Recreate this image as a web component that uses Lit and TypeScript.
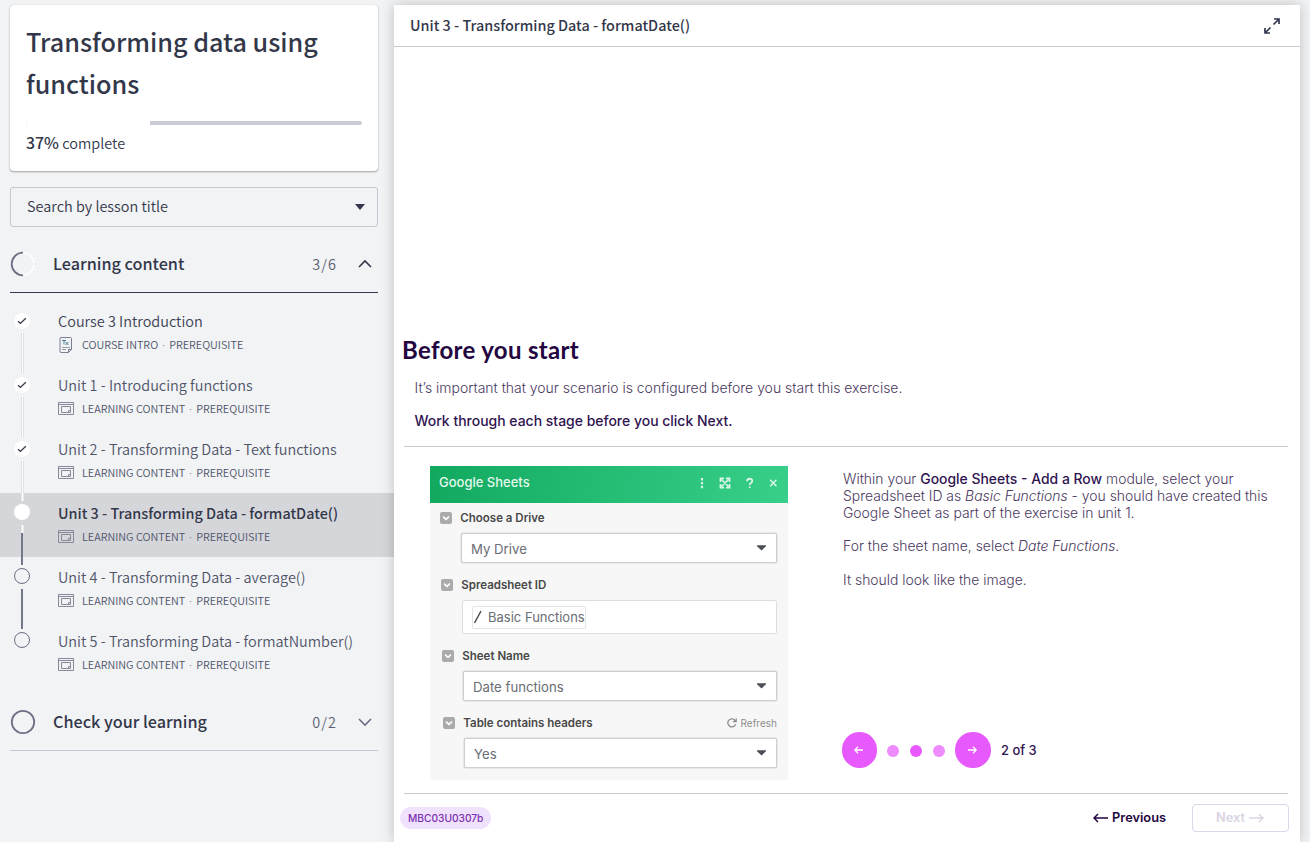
import { LitElement, html, css, svg, nothing } from "lit";
import { customElement, property } from "lit/decorators.js";
import { classMap } from "lit/directives/class-map.js";

type Status = "done" | "current" | "todo";
interface Lesson {
  title: string;
  kind: string;
  status: Status;
}

const LESSONS: Lesson[] = [
  { title: "Course 3 Introduction", kind: "COURSE INTRO", status: "done" },
  { title: "Unit 1 - Introducing functions", kind: "LEARNING CONTENT", status: "done" },
  { title: "Unit 2 - Transforming Data - Text functions", kind: "LEARNING CONTENT", status: "done" },
  { title: "Unit 3 - Transforming Data - formatDate()", kind: "LEARNING CONTENT", status: "current" },
  { title: "Unit 4 - Transforming Data - average()", kind: "LEARNING CONTENT", status: "todo" },
  { title: "Unit 5 - Transforming Data - formatNumber()", kind: "LEARNING CONTENT", status: "todo" },
];

@customElement("course-sidebar")
export class CourseSidebar extends LitElement {
  static styles = css`
    :host {
      display: flex;
      flex-direction: column;
      width: 394px;
      box-sizing: border-box;
      padding-top: 5px;
      font-family: "Noto Sans CJK SC", sans-serif;
      font-weight: 350;
      color: #33374a;
      font-size: 14.48px;
    }
    .card {
      margin: 0 16px 16px 10px;
      height: 166px;
      box-sizing: border-box;
      padding: 15px 16px 0;
      background: #fff;
      border-radius: 4px;
      box-shadow: 0 1px 2px rgba(0, 0, 0, 0.35), 0 0 1px rgba(0, 0, 0, 0.15);
    }
    .title {
      margin: 0;
      font-size: 25.2px;
      line-height: 42px;
      font-weight: 500;
    }
    .bar {
      display: flex;
      height: 4px;
      margin: 17px 0 6px;
      border-radius: 2px;
      overflow: hidden;
      background: #c9cbd6;
    }
    .fill {
      background: #fff;
    }
    .pct {
      line-height: 24px;
    }
    .pct b {
      font-weight: 500;
      font-size: 15.9px;
    }
    .search {
      display: flex;
      align-items: center;
      justify-content: space-between;
      margin: 0 16px 9px 10px;
      height: 40px;
      box-sizing: border-box;
      padding: 0 12px 0 16px;
      border: 1px solid #c6c8d4;
      border-radius: 3px;
    }
    .search span {
      padding-bottom: 3px;
    }
    .head {
      display: flex;
      align-items: center;
      height: 57px;
      box-sizing: border-box;
      margin: 0 16px 0 10px;
      border-bottom: 1px solid #c6c8d8;
    }
    .head.open {
      border-bottom-color: #33374f;
    }
    .head svg {
      flex: none;
    }
    .head .name {
      flex: 1;
      margin-left: 17px;
      padding-bottom: 2px;
      font-size: 16.2px;
      font-weight: 500;
    }
    .count {
      color: #5b5f73;
      letter-spacing: 1.1px;
      margin-right: 20px;
      padding-bottom: 1px;
    }
    .chev {
      margin-right: 5px;
    }
    .list {
      padding: 8px 0 9px;
    }
    .row {
      display: flex;
      height: 64px;
      padding-left: 14px;
    }
    .row.current {
      background: #d5d6da;
    }
    .rail {
      display: flex;
      flex-direction: column;
      align-items: center;
      width: 16px;
    }
    .seg {
      width: 1px;
      border: 1px solid #dfe0e3;
      border-width: 0 1px;
      background: #fff;
    }
    .seg.up {
      height: 8px;
    }
    .seg.down {
      flex: 1;
      margin-top: 4px;
    }
    .seg.dark {
      width: 2px;
      border: 0;
      background: #74788b;
    }
    .seg.none {
      visibility: hidden;
    }
    .seg.down.short {
      flex: none;
      height: 8px;
    }
    .seg.short + .seg.down {
      margin-top: 0;
    }
    .row.current .seg:not(.dark) {
      border-color: #e6e7ea;
    }
    .dot {
      width: 16px;
      height: 16px;
      flex: none;
      box-sizing: border-box;
      margin-top: 4px;
      border-radius: 50%;
      background: #fff;
      display: flex;
      align-items: center;
      justify-content: center;
    }
    .current .dot,
    .todo .dot {
      margin-top: 3px;
      margin-bottom: 1px;
    }
    .todo .dot {
      border: 1px solid #6b6f84;
      background: transparent;
    }
    .body {
      margin-left: 28px;
      padding-top: 8px;
    }
    .lt {
      line-height: 24px;
      color: #505468;
      white-space: nowrap;
    }
    .first .lt {
      color: #3d4153;
    }
    .current .lt {
      color: #33374a;
      font-weight: 500;
      font-size: 14.4px;
    }
    .meta {
      display: flex;
      align-items: center;
      height: 24px;
      font-size: 10.83px;
      color: #50546a;
      white-space: pre;
    }
    .meta span {
      padding-bottom: 2px;
    }
    .kind {
      margin-left: 8px;
    }
    .mid {
      width: 11px;
      text-align: center;
      font-family: "Noto Sans", sans-serif;
    }
  `;

  private icon(first: boolean) {
    return first
      ? html`<svg width="16" height="16" viewBox="0 0 16 16" fill="none" stroke="#7a7e91">
          <path d="M3 .5h9.500q1 0 1 1V12.500l-3 3H3q-1 0-1-1V1.500q0-1 1-1z" />
          <path d="M13.500 12.500h-3v3" />
          <path d="M4 3.500h4M6 3.500v4M7.500 5l3 3M10.500 5l-3 3" stroke="#4d7f96" />
          <path d="M4 10.500h8M4 12.500h4" stroke="#9a9dac" />
        </svg>`
      : html`<svg width="16" height="16" viewBox="0 0 16 16" fill="none" stroke="#85899a">
          <path d="M.5 1.500h15v12H.5zM.5 3.500h15M3.500 5.500h9v6h-9z" /><path d="M12.500 9.500h-2v2" />
        </svg>`;
  }

  private row(l: Lesson, i: number) {
    const last = i === LESSONS.length - 1;
    const todo = l.status === "todo";
    return html`<div class=${classMap({ row: true, [l.status]: true, first: i === 0 })}>
      <div class="rail">
        <div class=${classMap({ seg: true, up: true, dark: todo, none: i === 0 })}></div>
        <div class="dot">
          ${l.status === "done"
            ? html`<svg width="10" height="8" viewBox="0 0 10 8" fill="none" stroke="#33374a" stroke-width="1.3">
                <path d="M1 4.2 3.4 6.4 8.8 1.2" />
              </svg>`
            : nothing}
        </div>
        ${l.status === "current" ? html`<div class="seg down short"></div>` : nothing}
        <div class=${classMap({ seg: true, down: true, dark: l.status !== "done", none: last })}></div>
      </div>
      <div class="body">
        <div class="lt">${l.title}</div>
        <div class="meta">${this.icon(i === 0)}<span class="kind">${l.kind}</span><span class="mid">·</span><span>PREREQUISITE</span></div>
      </div>
    </div>`;
  }

  private head(name: string, count: string, open: boolean) {
    return html`<div class=${classMap({ head: true, open })}>
      <svg width="26" height="26" viewBox="0 0 26 26" fill="none" stroke-width="1.8" stroke="#6b6f84">
        ${open
          ? svg`<circle cx="13" cy="13" r="11.3" stroke="#fff" /><circle cx="13" cy="13" r="12" stroke="#d9dade" stroke-width=".6" stroke-dasharray="1.5 2" /><path d="M13 1.7a11.3 11.3 0 0 0 0 22.6" />`
          : svg`<circle cx="13" cy="13" r="11.2" />`}
      </svg>
      <span class="name">${name}</span><span class="count">${count}</span>
      <svg class="chev" width="16" height="10" viewBox="0 0 16 10" fill="none" stroke=${open ? "#33374a" : "#6b6f84"} stroke-width="1.6">
        <path d=${open ? "M2 8 8 2l6 6" : "M2 2l6 6 6-6"} />
      </svg>
    </div>`;
  }

  render() {
    return html`
      <div class="card">
        <h1 class="title">Transforming data using functions</h1>
        <div class="bar"><div class="fill" style="width:37%"></div></div>
        <div class="pct"><b>37%</b> complete</div>
      </div>
      <div class="search">
        <span>Search by lesson title</span>
        <svg width="10" height="6" viewBox="0 0 10 6"><path d="M0 0h10L5 6z" fill="#33374f" /></svg>
      </div>
      ${this.head("Learning content", "3/6", true)}
      <div class="list">${LESSONS.map((l, i) => this.row(l, i))}</div>
      ${this.head("Check your learning", "0/2", false)}
    `;
  }
}

@customElement("sheet-field")
export class SheetField extends LitElement {
  @property() label = "";
  @property() value = "";
  @property({ type: Boolean }) path = false;
  @property({ type: Boolean }) refresh = false;

  static styles = css`
    :host {
      display: block;
    }
    .top {
      display: flex;
      align-items: center;
      height: 14px;
      font-size: 11.5px;
      font-weight: 600;
      color: #484848;
    }
    .top .name {
      flex: 1;
      margin-left: 8.3px;
    }
    .re {
      display: flex;
      gap: 4px;
      align-items: center;
      font-weight: 400;
      font-size: 10px;
      color: #8d8d8d;
    }
    .box {
      display: flex;
      align-items: center;
      justify-content: space-between;
      height: 30px;
      box-sizing: border-box;
      margin: 8px 0 0 21px;
      padding: 0 10px 0 9px;
      background: #fff;
      border: 1px solid #cfcfcf;
      border-radius: 2px;
      box-shadow: 0 0 0 0.5px #d8d8d8;
      font-size: 13.2px;
      color: #6a6d73;
    }
    .box span {
      padding-top: 1px;
    }
    .box.tall {
      height: 34px;
      border-color: #dedede;
      box-shadow: none;
      font-size: 13px;
    }
    .box .tag {
      display: flex;
      align-items: center;
      gap: 5px;
      height: 21px;
      padding: 0;
      border: 1px solid #e2e4e6;
      border-radius: 2px;
    }
  `;

  render() {
    return html`<div class="top">
        <svg width="12" height="12" viewBox="0 0 12 12">
          <rect width="12" height="12" rx="2" fill="#ababab" />
          <path d="M3 4.6 6 7.4 9 4.6" fill="none" stroke="#fff" stroke-width="1.5" />
        </svg>
        <span class="name">${this.label}</span>
        ${this.refresh
          ? html`<span class="re"
              ><svg width="10" height="10" viewBox="0 0 10 10" fill="none" stroke="#8d8d8d" stroke-width="1.3">
                <path d="M8.6 6.3A4 4 0 1 1 7.8 2.2L9 3.4M9.2.4v3.2H6" /></svg
              >Refresh</span
            >`
          : nothing}
      </div>
      <div class=${classMap({ box: true, tall: this.path })}>
        ${this.path
          ? html`<span class="tag"
              ><svg width="10" height="14" viewBox="0 0 10 14"><path d="M1.500 13 8 1" stroke="#444" stroke-width="1.4" /></svg
              >${this.value}</span
            >`
          : html`<span>${this.value}</span
              ><svg width="9" height="6" viewBox="0 0 9 6"><path d="M0 .3h9v1L4.5 5.6 0 1.3z" fill="#4a4f57" /></svg>`}
      </div>`;
  }
}

@customElement("lesson-panel")
export class LessonPanel extends LitElement {
  static styles = css`
    :host {
      display: flex;
      flex-direction: column;
      width: 906px;
      height: 837px;
      margin-top: 5px;
      background: #fff;
      box-shadow: 0 0 12px rgba(0, 0, 0, 0.22);
      font-family: Inter, sans-serif;
      color: #4a3860;
    }
    .bar {
      display: flex;
      align-items: center;
      justify-content: space-between;
      height: 42px;
      box-sizing: border-box;
      padding: 0 20px 0 16px;
      border-bottom: 1px solid #c9cad2;
      font: 500 14.4px "Noto Sans CJK SC", sans-serif;
      color: #33374a;
    }
    .bar span {
      padding-bottom: 2px;
    }
    .slide {
      flex: 1;
      display: flex;
      flex-direction: column;
      padding: 287px 12px 0 10px;
    }
    h2 {
      margin: 0 0 0 -2px;
      font: 700 24px/32px Lato, sans-serif;
      letter-spacing: 0.32px;
      color: #23063f;
    }
    .lead {
      margin: 14px 0 0 10.5px;
      font-size: 13.98px;
      font-weight: 300;
      line-height: 16px;
    }
    .lead.strong {
      margin-top: 17px;
      margin-bottom: 17px;
      font-weight: 500;
      color: #2f1450;
    }
    .cols {
      display: flex;
      height: 346px;
      border-top: 1px solid #cdc8cf;
      border-bottom: 1px solid #cdc8cf;
    }
    .sheet {
      width: 358px;
      height: 314px;
      margin: 19px 0 0 26px;
      background: #f7f7f7;
    }
    .shead {
      display: flex;
      align-items: center;
      height: 37px;
      padding: 0 11px 4px 9px;
      box-sizing: border-box;
      background: linear-gradient(100deg, #12a95f, #38cf8a);
      color: #e4f8ee;
      font-size: 13px;
      font-weight: 500;
    }
    .shead span {
      flex: 1;
      padding-bottom: 1px;
    }
    .fields {
      display: flex;
      flex-direction: column;
      padding: 8px 11px 0 10px;
    }
    .fields sheet-field:nth-child(2) {
      margin: 15px 0 0 1px;
    }
    .fields sheet-field:nth-child(3) {
      margin: 15px 0 0 2px;
    }
    .fields sheet-field:nth-child(4) {
      margin: 15px 0 0 3px;
    }
    .text {
      display: flex;
      flex-direction: column;
      margin-left: 55px;
      padding-top: 24px;
      font-size: 13.93px;
      font-weight: 300;
      line-height: 17px;
      white-space: nowrap;
    }
    .text p {
      margin: 0 0 16.4px;
    }
    .text b {
      font-weight: 500;
      color: #2f1450;
    }
    .pager {
      display: flex;
      align-items: center;
      margin: 127.3px 0 0 -1.500px;
    }
    .go {
      width: 35.5px;
      height: 35.5px;
      border-radius: 50%;
      background: #e859fd;
      display: flex;
      align-items: center;
      justify-content: center;
    }
    .dots {
      display: flex;
      gap: 11px;
      margin: 2px 10.5px 0 9.5px;
    }
    .dots i {
      width: 12px;
      height: 12px;
      border-radius: 50%;
      background: #ee8bfd;
    }
    .dots i.on {
      background: #e859fd;
    }
    .of {
      margin-left: 10.5px;
      font-size: 12.9px;
      font-weight: 500;
      color: #2f1450;
    }
    .foot {
      display: flex;
      align-items: center;
      height: 48px;
      margin: 0 -1px 0 -4px;
    }
    .id {
      height: 22px;
      line-height: 22px;
      padding: 0 8px;
      border-radius: 11px;
      background: #f0e2fc;
      color: #7a2fb0;
      font-size: 10.2px;
      font-weight: 500;
      margin-right: auto;
    }
    .prev,
    .next {
      display: flex;
      align-items: center;
      gap: 4px;
      font-size: 12.8px;
      font-weight: 600;
      color: #23063f;
    }
    .prev {
      padding-bottom: 1px;
    }
    .next {
      width: 97px;
      height: 28px;
      box-sizing: border-box;
      margin-left: 26px;
      justify-content: center;
      border: 1px solid #dcd6e8;
      border-radius: 4px;
      color: #dad3e2;
      padding: 0 1px 1px 0;
    }
  `;

  render() {
    return html`
      <div class="bar">
        <span>Unit 3 - Transforming Data - formatDate()</span>
        <svg width="16" height="16" viewBox="0 0 16 16" fill="none" stroke="#33374f" stroke-width="1.7">
          <path d="M9.500 6.500 15 1M10 1h5v5M6.500 9.500 1 15M1 10v5h5" />
        </svg>
      </div>
      <div class="slide">
        <h2>Before you start</h2>
        <div class="lead">It’s important that your scenario is configured before you start this exercise.</div>
        <div class="lead strong">Work through each stage before you click Next.</div>
        <div class="cols">
          <div class="sheet">
            <div class="shead">
              <span>Google Sheets</span>
              <svg width="78" height="12" viewBox="0 0 78 12" fill="none" stroke="#d9f5e7" stroke-width="1.6">
                <path d="M3 1v2.4M3 4.9v2.4M3 8.8v2.4" stroke-width="2.2" />
                <path d="M22.500 2.500l7 7M29.500 2.500l-7 7M21.400 5V1.400H25M27 1.400h3.600V5M21.400 7v3.600H25M27 10.600h3.600V7" />
                <path d="M48 4.200C48 1 53.300 1 53.300 3.900 53.300 5.800 50.700 5.700 50.700 8M50.700 9.400V11" stroke-width="1.800" />
                <path d="M71.200 2.700l6.300 6.600M77.500 2.700l-6.300 6.600" />
              </svg>
            </div>
            <div class="fields">
              <sheet-field label="Choose a Drive" value="My Drive"></sheet-field>
              <sheet-field label="Spreadsheet ID" value="Basic Functions" path></sheet-field>
              <sheet-field label="Sheet Name" value="Date functions"></sheet-field>
              <sheet-field label="Table contains headers" value="Yes" refresh></sheet-field>
            </div>
          </div>
          <div class="text">
            <p>
              Within your <b>Google Sheets - Add a Row</b> module, select your<br />Spreadsheet ID as
              <em>Basic Functions</em> - you should have created this<br />Google Sheet as part of the exercise in unit 1.
            </p>
            <p>For the sheet name, select <em>Date Functions</em>.</p>
            <p>It should look like the image.</p>
            <div class="pager">
              <div class="go">
                <svg width="10" height="10" viewBox="0 0 10 10" fill="none" stroke="#fff" stroke-width="1.3"><path d="M9 5H.800M4 1.800.800 5 4 8.200" /></svg>
              </div>
              <div class="dots"><i></i><i class="on"></i><i></i></div>
              <div class="go">
                <svg width="10" height="10" viewBox="0 0 10 10" fill="none" stroke="#fff" stroke-width="1.3"><path d="M0 5h8.200M5 1.800 8.200 5 5 8.200" /></svg>
              </div>
              <span class="of">2 of 3</span>
            </div>
          </div>
        </div>
        <div class="foot">
          <span class="id">MBC03U0307b</span>
          <span class="prev"
            ><svg width="15" height="10" viewBox="0 0 15 10" fill="none" stroke="#23063f" stroke-width="1.500"><path d="M15 5H1M5 1 1 5l4 4" /></svg
            >Previous</span
          >
          <span class="next"
            >Next<svg width="15" height="10" viewBox="0 0 15 10" fill="none" stroke="#dad3e2" stroke-width="1.400"><path d="M0 5h14M10 1l4 4-4 4" /></svg
          ></span>
        </div>
      </div>
    `;
  }
}

@customElement("app-root")
export class AppRoot extends LitElement {
  static styles = css`
    :host {
      display: flex;
      width: 1310px;
      height: 842px;
      overflow: hidden;
      background: #f1f3f5;
    }
  `;
  render() {
    return html`<course-sidebar></course-sidebar><lesson-panel></lesson-panel>`;
  }
}
